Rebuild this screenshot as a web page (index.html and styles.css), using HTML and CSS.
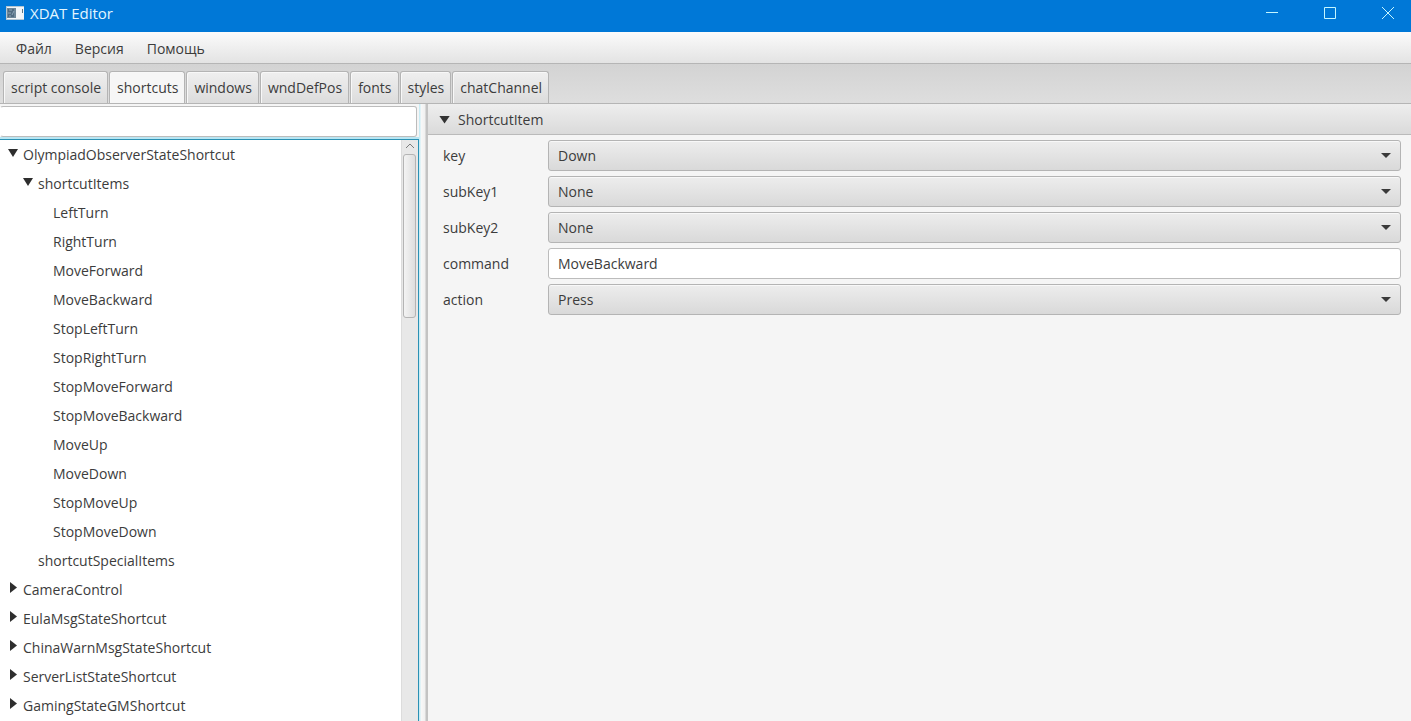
FILE: index.html
```html
<!DOCTYPE html>
<html lang="ru">
<head>
<meta charset="utf-8">
<title>XDAT Editor</title>
<link rel="stylesheet" href="styles.css">
</head>
<body>
<header class="titlebar">
  <svg class="app-icon" width="18" height="14" viewBox="0 0 18 14" aria-hidden="true">
    <rect width="18" height="14" fill="#f1f5f8"/>
    <rect x="1" y="2" width="9" height="10" fill="#6d8799"/>
    <path d="M2 3h6v8H2z" fill="#4f6a80"/>
    <path d="M3 4h3M2 7h3M3 10h2M6 9l2-4" stroke="#8ba5b8" fill="none"/>
    <path d="M16.500 3v4" stroke="#5d7787"/>
    <path d="M0 .5h18M0 13.500h18M.5 0v14" stroke="#b4c6d2" fill="none"/>
  </svg>
  <h1 class="app-title">XDAT Editor</h1>
  <div class="window-buttons">
    <button class="window-button" aria-label="Minimize"><svg width="14" height="14" viewBox="0 0 14 14"><path d="M1 6.500h12"/></svg></button>
    <button class="window-button" aria-label="Maximize"><svg width="14" height="14" viewBox="0 0 14 14"><path d="M1.500 1.500h11v11h-11z"/></svg></button>
    <button class="window-button" aria-label="Close"><svg width="14" height="14" viewBox="0 0 14 14"><path d="M1 1l12 12M13 1L1 13"/></svg></button>
  </div>
</header>
<nav class="menubar">
  <button class="menu">Файл</button>
  <button class="menu">Версия</button>
  <button class="menu">Помощь</button>
</nav>
<div class="tabs" role="tablist">
  <button class="tab" role="tab">script console</button>
  <button class="tab selected" role="tab" aria-selected="true">shortcuts</button>
  <button class="tab" role="tab">windows</button>
  <button class="tab" role="tab">wndDefPos</button>
  <button class="tab" role="tab">fonts</button>
  <button class="tab" role="tab">styles</button>
  <button class="tab" role="tab">chatChannel</button>
</div>
<main class="workspace">
  <section class="sidebar">
    <input class="field filter" type="text" aria-label="Filter">
    <div class="tree-box">
      <ul class="tree">
        <li><button class="node open">OlympiadObserverStateShortcut</button>
          <ul class="branch">
            <li><button class="node open">shortcutItems</button>
              <ul class="branch">
                <li><button class="node">LeftTurn</button></li>
                <li><button class="node">RightTurn</button></li>
                <li><button class="node">MoveForward</button></li>
                <li><button class="node">MoveBackward</button></li>
                <li><button class="node">StopLeftTurn</button></li>
                <li><button class="node">StopRightTurn</button></li>
                <li><button class="node">StopMoveForward</button></li>
                <li><button class="node">StopMoveBackward</button></li>
                <li><button class="node">MoveUp</button></li>
                <li><button class="node">MoveDown</button></li>
                <li><button class="node">StopMoveUp</button></li>
                <li><button class="node">StopMoveDown</button></li>
              </ul>
            </li>
            <li><button class="node">shortcutSpecialItems</button></li>
          </ul>
        </li>
        <li><button class="node closed">CameraControl</button></li>
        <li><button class="node closed">EulaMsgStateShortcut</button></li>
        <li><button class="node closed">ChinaWarnMsgStateShortcut</button></li>
        <li><button class="node closed">ServerListStateShortcut</button></li>
        <li><button class="node closed">GamingStateGMShortcut</button></li>
      </ul>
      <div class="scrollbar">
        <svg class="scroll-up" width="10" height="6" viewBox="0 0 10 6" aria-hidden="true"><path d="M1 5l4-4 4 4"/></svg>
        <div class="thumb"></div>
      </div>
    </div>
  </section>
  <div class="divider"></div>
  <section class="details">
    <button class="pane-title" aria-expanded="true">ShortcutItem</button>
    <form class="form">
      <label for="key">key</label>
      <div class="combo"><select id="key"><option>Down</option></select></div>
      <label for="subKey1">subKey1</label>
      <div class="combo"><select id="subKey1"><option>None</option></select></div>
      <label for="subKey2">subKey2</label>
      <div class="combo"><select id="subKey2"><option>None</option></select></div>
      <label for="command">command</label>
      <input class="field" id="command" type="text" value="MoveBackward">
      <label for="action">action</label>
      <div class="combo"><select id="action"><option>Press</option></select></div>
    </form>
  </section>
</main>
</body>
</html>
```
FILE: styles.css
```css
* { box-sizing: border-box; }
body {
  margin: 0;
  height: 100vh;
  display: flex;
  flex-direction: column;
  overflow: hidden;
  background: #f5f5f5;
  color: #3c3c3c;
  font: 14px/20px "Open Sans", "Noto Sans", sans-serif;
}
button, input, select { font: inherit; color: inherit; margin: 0; outline: none; }
button { border: 0; padding: 0; background: none; text-align: left; }
ul { margin: 0; padding: 0; list-style: none; }

.titlebar {
  flex: none;
  display: flex;
  height: 32px;
  padding: 0 8px 6px 6px;
  align-items: center;
  gap: 6px;
  background: #0078d7;
  color: #e2f6ff;
}
.app-title { margin: 0; font-size: 15px; font-weight: 400; }
.window-buttons { display: flex; gap: 44px; margin-left: auto; padding-right: 8px; }
.window-button { display: flex; }
.window-button svg { fill: none; stroke: #c5f6ff; }

.menubar {
  flex: none;
  display: flex;
  height: 32px;
  padding: 2px 16px 0;
  gap: 23px;
  background: linear-gradient(#fbfbfb, #e3e3e3);
  border-bottom: 1px solid #b5b5b5;
}

.tabs {
  flex: none;
  display: flex;
  align-items: flex-end;
  gap: 1px;
  height: 40px;
  padding: 0 3px;
  background: linear-gradient(#d3d3d3, #dedede);
  border-bottom: 1px solid #b5b5b5;
}
.tab {
  height: 32px;
  padding: 0 6px 0 7px;
  border: 1px solid #b4b4b4;
  border-bottom: 0;
  border-radius: 3px 3px 0 0;
  background: linear-gradient(#efefef, #dcdcdc);
  box-shadow: inset 1px 1px #f8f8f8;
}
.tab.selected { background: #f6f6f6; }

.workspace { flex: 1; min-height: 0; display: flex; }
.sidebar { flex: 0 0 30%; min-width: 0; max-width: 419px; display: flex; flex-direction: column; }
.field {
  width: 100%;
  height: 31px;
  padding: 0 9px;
  border: 1px solid #bcbcbc;
  border-radius: 3px;
  background: #fff;
}
.sidebar .filter { width: auto; margin: 2px 2px; border-left-color: #fff; margin-left: 0; }
.tree-box {
  flex: 1;
  min-height: 0;
  display: flex;
  border-top: 1px solid #2b91b4;
  border-right: 1px solid #2b91b4;
  box-shadow: 0 0 0 2px #b9e6f3;
  background: #fff;
}
.tree { flex: 1; min-width: 0; overflow: hidden; padding-left: 8px; }
.branch { padding-left: 15px; }
.node { display: flex; width: 100%; height: 29px; align-items: center; }
.node::before { content: ""; flex: none; width: 10px; height: 11px; margin: 0 5px 4px 0; }
.open::before { background: #2e2e2e; clip-path: polygon(0 2px, 100% 2px, 50% 10px); }
.closed::before { background: #2e2e2e; clip-path: polygon(2px 0, 9px 50%, 2px 100%); }

.scrollbar {
  flex: none;
  width: 17px;
  padding: 3px 2px 0 1px;
  border-left: 1px solid #dcdcdc;
  background: #e8e8e8;
}
.scroll-up { display: block; margin: 0 auto 5px; fill: none; stroke: #7c7c7c; }
.thumb {
  height: 164px;
  border: 1px solid #b4b4b4;
  border-radius: 3px;
  background: linear-gradient(90deg, #f3f3f3, #dedede);
}
.divider {
  flex: none;
  width: 9px;
  background: linear-gradient(90deg, #c9ecf5 1px, #f8f8f8 2px, #f0f0f0 6px, #c3c3c3 7px);
}

.details { flex: 1; min-width: 0; }
.pane-title {
  display: flex;
  align-items: center;
  width: 100%;
  height: 31px;
  padding: 1px 11px 0;
  gap: 8px;
  border-bottom: 1px solid #bababa;
  background: linear-gradient(#eee, #dadada);
}
.pane-title::before { content: ""; width: 11px; height: 8px; background: #333; clip-path: polygon(0 0, 100% 0, 50% 100%); }
.form {
  display: grid;
  grid-template-columns: 100px 1fr;
  gap: 5px;
  align-items: center;
  padding: 5px 10px 5px 15px;
}
.combo { position: relative; }
.combo::after {
  content: "";
  position: absolute;
  right: 10px;
  top: 13px;
  width: 10px;
  height: 5px;
  background: #3a3a3a;
  clip-path: polygon(0 0, 100% 0, 50% 100%);
  pointer-events: none;
}
.combo select {
  display: block;
  width: 100%;
  height: 31px;
  padding: 0 24px 0 9px;
  appearance: none;
  border: 1px solid #b4b4b4;
  border-radius: 3px;
  background: linear-gradient(#ededed, #d9d9d9);
  box-shadow: inset 0 1px #f8f8f8;
}
```
